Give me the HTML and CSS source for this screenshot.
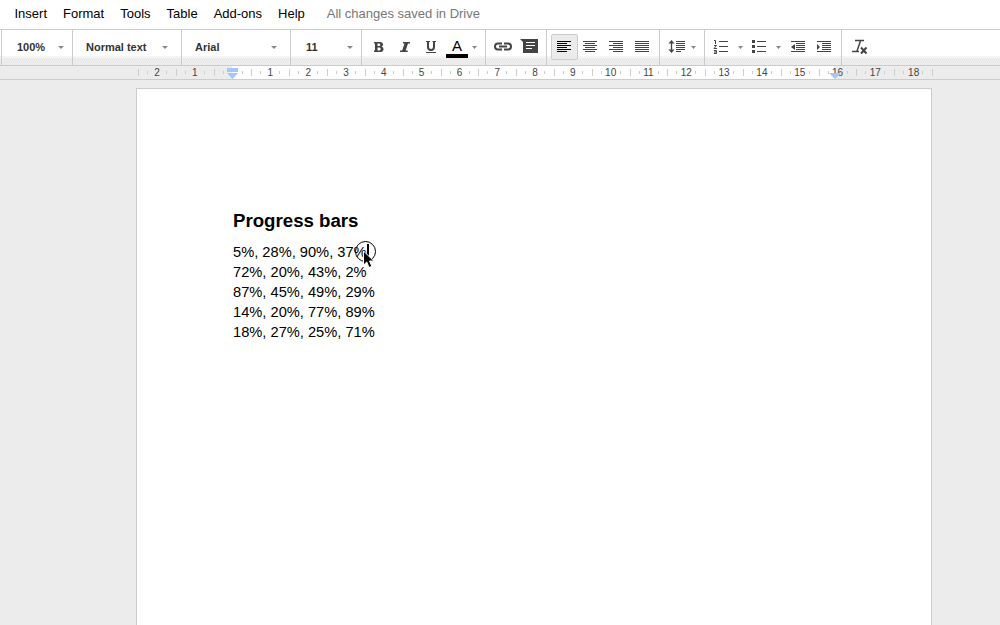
FILE: index.html
```html
<!DOCTYPE html>
<html lang="en">
<head>
<meta charset="utf-8">
<title>Document</title>
<link rel="stylesheet" href="styles.css">
</head>
<body>
<nav class="menu">
  <span>Insert</span><span>Format</span><span>Tools</span><span>Table</span><span>Add-ons</span><span>Help</span>
  <span class="status">All changes saved in Drive</span>
</nav>
<div class="toolbar">
  <div class="group zoom"><span>100%</span><i class="caret"></i></div>
  <div class="group style"><span>Normal text</span><i class="caret"></i></div>
  <div class="group font"><span>Arial</span><i class="caret"></i></div>
  <div class="group size"><span>11</span><i class="caret"></i></div>
  <div class="group format">
    <svg width="123" height="35" viewBox="362 30 123 35">
      <path d="M374 42h6q3 0 3 2.500 0 1.500-1.500 2.100 2 .6 2 2.500 0 2.900-3.200 2.900H374v-1.500h1v-7h-1zM377.500 43.500v2.500h1.800q1-.1 1-1.200t-1-1.300zM377.500 47.600v2.900h2q1.200-.1 1.200-1.400t-1.200-1.500z" fill="#444" fill-rule="evenodd"/>
      <path d="M403 42h7v1.500h-2l-2.300 7h2v1.500h-7.700v-1.500h2.200l2.300-7H403z" fill="#444"/>
      <path d="M428 42v5q0 3 3 3t3-3v-5" fill="none" stroke="#444" stroke-width="2"/>
      <path d="M426 41.500h4M432.500 41.500h3.500M426 52.500h10" fill="none" stroke="#444"/>
      <text x="452" y="51" class="letter">A</text>
      <path d="M446 54h22v4h-22z"/>
      <path d="M472 46h5l-2.500 3z" fill="#888"/>
    </svg>
  </div>
  <div class="group insert">
    <svg width="60" height="35" viewBox="486 30 60 35">
      <path d="M502 43.500h-4a3 3 0 0 0 0 6h4M504 43.500h4a3 3 0 0 1 0 6h-4M499 46.500h8" fill="none" stroke="#444" stroke-width="2"/>
      <path d="M520 39h18v14h-15V42z" fill="#444"/>
      <path d="M526 42.500h9M526 45.500h9M526 48.500h6" stroke="#fff" stroke-width="1"/>
    </svg>
  </div>
  <div class="group align">
    <svg width="112" height="35" viewBox="547 30 112 35">
      <rect x="551.500" y="34.500" width="26" height="25" rx="1.500" fill="#ebebeb" stroke="#ccc"/>
      <path d="M557 41.500h14M557 43.500h10M557 45.500h14M557 47.500h10M557 49.500h14M557 51.500h10" stroke="#000"/>
      <path d="M583 41.500h14M585 43.500h10M583 45.500h14M585 47.500h10M583 49.500h14M585 51.500h10M609 41.500h14M613 43.500h10M609 45.500h14M613 47.500h10M609 49.500h14M613 51.500h10M635 41.500h14M635 43.500h14M635 45.500h14M635 47.500h14M635 49.500h14M635 51.500h14" stroke="#444"/>
    </svg>
  </div>
  <div class="group spacing">
    <svg width="44" height="35" viewBox="660 30 44 35">
      <path d="M671.500 42v9" fill="none" stroke="#444" stroke-width="1.300"/>
      <path d="M668.500 43.500l3-3.500 3 3.500zM668.500 49.500l3 3.500 3-3.500z" fill="#444"/>
      <path d="M676 41.500h9M676 43.500h9M676 45.500h9M676 47.500h9M676 49.500h9M676 51.500h5" stroke="#444"/>
      <path d="M691 46h5l-2.500 3z" fill="#888"/>
    </svg>
  </div>
  <div class="group lists">
    <svg width="136" height="35" viewBox="705 30 136 35">
      <path d="M719 41.500h9M719 46.500h9M719 51.500h9M757 41.500h9M757 46.500h9M757 51.500h9" stroke="#444"/>
      <path d="M714 40.500h1.500v3.500M714 45.500h2.500l-2.500 3h3M714 50.500h2.500v3H714M714 52h2" fill="none" stroke="#444"/>
      <path d="M752 40h3v3h-3zM752 45h3v3h-3zM752 50h3v3h-3z" fill="#444"/>
      <path d="M738 46h5l-2.500 3zM776 46h5l-2.500 3z" fill="#888"/>
      <path d="M791 41.500h14M796 43.500h9M796 45.500h9M796 47.500h9M796 49.500h9M791 51.500h14M817 41.500h14M822 43.500h9M822 45.500h9M822 47.500h9M822 49.500h9M817 51.500h14" stroke="#444"/>
      <path d="M795 44v6l-4-3zM817 44v6l3-3z" fill="#444"/>
    </svg>
  </div>
  <div class="group clear">
    <svg width="40" height="35" viewBox="842 30 40 35">
      <path d="M855 40.500h9M852 51.500h7M860.500 41l-3.500 10" fill="none" stroke="#444" stroke-width="1.500"/>
      <path d="M861 47.500l5.500 6M866.500 47.500l-5.500 6" stroke="#444" stroke-width="2"/>
    </svg>
  </div>
</div>
<div class="ruler">
  <div class="cell out">2</div><div class="cell out">1</div><div class="cell start"><svg class="marker" width="11" height="12" viewBox="0 0 11 12"><path d="M0 0h11v4H0zM0 5h11L5.500 11z"/></svg></div>
  <div class="cell">1</div><div class="cell">2</div><div class="cell">3</div><div class="cell">4</div><div class="cell">5</div><div class="cell">6</div><div class="cell">7</div><div class="cell">8</div><div class="cell">9</div><div class="cell">10</div><div class="cell">11</div><div class="cell">12</div><div class="cell">13</div><div class="cell">14</div><div class="cell">15</div>
  <div class="cell end">16<svg class="marker" width="12" height="6" viewBox="0 0 12 6"><path d="M0 0h12L6 6z"/></svg></div><div class="cell out">17</div><div class="cell out last">18</div>
</div>
<main class="page">
  <h1>Progress bars</h1>
  <p>5%, 28%, 90%, 37%</p>
  <p>72%, 20%, 43%, 2%</p>
  <p>87%, 45%, 49%, 29%</p>
  <p>14%, 20%, 77%, 89%</p>
  <p>18%, 27%, 25%, 71%</p>
</main>
<svg class="pointer" width="24" height="30" viewBox="354 240 24 30">
  <circle cx="365.500" cy="251.500" r="10" fill="none" stroke="#000"/>
  <path d="M367 244h2v12h-2z"/>
  <path d="M363.500 251v14l3.300-3 2.200 5.500 2.800-1.200-2.300-5.300h4.300z" stroke="#fff"/>
</svg>
</body>
</html>
```

FILE: styles.css
```css
* { box-sizing: border-box; }
body {
  margin: 0;
  height: 625px;
  overflow: hidden;
  display: flex;
  flex-direction: column;
  background: #ececec;
  color: #000;
  font-family: "Liberation Sans", Arial, sans-serif;
}
.menu {
  height: 30px;
  flex: none;
  display: flex;
  gap: 16px;
  padding: 6px 0 0 14.5px;
  background: #fff;
  border-bottom: 1px solid #ccc;
  font-size: 13px;
  line-height: 16px;
}
.status { margin-left: 6px; color: #777; }
.toolbar {
  height: 36px;
  flex: none;
  display: flex;
  padding-left: 1px;
  background:
    repeating-conic-gradient(#fff 0 25%, #ececec 0 50%) 0 26px / 2px 2px repeat-x,
    linear-gradient(#fff 27px, #ececec 27px);
  border-bottom: 1px solid #ccc;
  font-size: 11px;
  font-weight: bold;
  color: #333;
}
.group {
  flex: none;
  display: flex;
  justify-content: space-between;
  border-left: 1px solid #ccc;
}
.group span { line-height: 35px; }
.group svg { flex: none; display: block; }
.zoom { width: 71px; padding: 0 8px 0 15px; }
.style { width: 109px; padding: 0 13px 0 13px; }
.font { width: 109px; padding: 0 13px 0 13px; }
.size { width: 71px; padding: 0 8px 0 15px; }
.format { width: 124px; }
.insert { width: 61px; }
.align { width: 113px; }
.spacing { width: 45px; }
.lists { width: 137px; }
.caret {
  width: 6px;
  height: 3px;
  margin-top: 16px;
  background: #888;
  clip-path: polygon(0 0, 100% 0, 50% 100%);
}
.letter { font-size: 15px; font-weight: normal; fill: #000; }
.ruler {
  height: 14px;
  flex: none;
  display: flex;
  padding-left: 138px;
  border-bottom: 1px solid #ccc;
  font-size: 10px;
  line-height: 14px;
  color: #444;
}
.cell {
  position: relative;
  width: 37.82px;
  flex: none;
  text-align: center;
  background:
    linear-gradient(#ccc, #ccc) 0 3px / 1px 7px no-repeat,
    linear-gradient(#ccc, #ccc) 9px 5px / 1px 3px no-repeat,
    linear-gradient(#ccc, #ccc) 28px 5px / 1px 3px no-repeat,
    var(--base, linear-gradient(#fff, #fff));
}
.out { --base: linear-gradient(#ececec, #ececec); }
.start { --base: linear-gradient(90deg, #ececec 50%, #fff 50%); }
.end { --base: linear-gradient(90deg, #fff 15px, #ececec 15px); }
.last {
  width: 38.8px;
  --base: linear-gradient(#ccc, #ccc) 100% 3px / 1px 7px no-repeat;
}
.marker { position: absolute; left: 13px; top: 2px; fill: #a4c6f8; }
.end .marker { left: 10px; top: 7px; }
.page {
  width: 796px;
  flex: 1;
  margin: 8px 0 0 136px;
  padding: 119px 96px 0;
  background: #fff;
  border: 1px solid #ccc;
  border-bottom: 0;
}
h1 { margin: 0 0 9px; font-size: 18.667px; line-height: 25px; }
p { margin: 0; font-size: 14.667px; line-height: 20px; }
.pointer { position: absolute; left: 354px; top: 240px; }
```
